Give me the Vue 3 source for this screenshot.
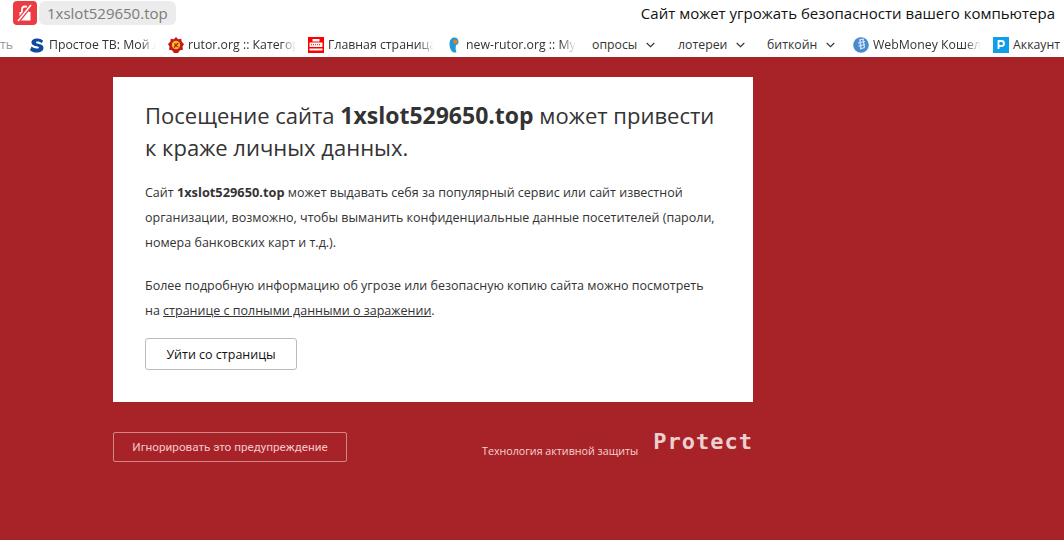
<template>
  <div class="page">
    <header class="browser">
      <div class="address">
        <span class="shield">
          <svg width="24" height="24" viewBox="0 0 24 24">
            <rect x="6.500" y="11" width="11" height="8.500" fill="#fff" />
            <path d="M9 11V8.500a3 3 0 0 1 6 0V11" fill="none" stroke="#fff" stroke-width="1.800" />
            <path d="M5.500 19.500 18.500 3.500" stroke="#ec3b43" stroke-width="4" />
            <path d="M5 20 18 4" stroke="#fff" stroke-width="1.600" />
          </svg>
        </span>
        <span class="host">1xslot529650.top</span>
        <span class="warning">Сайт может угрожать безопасности вашего компьютера</span>
      </div>
      <nav class="bookmarks">
        <span class="cut">ать</span>
        <a v-for="b in bookmarks" :key="b.label" class="mark" :class="{ fade: b.fade, folder: b.folder }" :style="{ width: b.width + 'px' }">
          <svg v-if="b.icon === 's'" class="ico" viewBox="0 0 16 16">
            <path d="M14 3.600C12.500 2.300 10.500 1.500 8.300 1.500 5 1.500 2.500 3 2.500 5.400c0 4.400 7.500 3 7.500 5 0 .8-1 1.200-2.300 1.200-2 0-3.800-.8-5.200-2L1 13.200c1.700 1.400 4 2.300 6.800 2.300 3.700 0 6.700-1.500 6.700-4.700 0-4.500-7.600-3.300-7.600-5.200 0-.7.800-1 1.800-1 1.500 0 3 .6 4.200 1.600z" fill="#0d4a9e" />
          </svg>
          <svg v-else-if="b.icon === 'rutor'" class="ico" viewBox="0 0 16 16">
            <path d="M8 0l2.200 2.300 3-.5.500 3 2.300 2.200-1.500 2.700.5 3-3 .6L10 16H6l-2-2.700-3-.6.500-3L0 7l2.300-2.200.5-3 3 .5z" fill="#c9161d" />
            <circle cx="8" cy="8" r="4.200" fill="#f2c21a" />
            <path d="M6 10.500 10.200 6M6.500 6.500c1.500 2.500 2.500 3.500 4 3.500" stroke="#b3141a" stroke-width="1.200" fill="none" />
          </svg>
          <svg v-else-if="b.icon === 'news'" class="ico" viewBox="0 0 16 16">
            <rect width="16" height="16" fill="#f00" />
            <rect x="4.500" y="2" width="7" height="2.500" fill="#fff" />
            <rect x="1.500" y="5.500" width="13" height="4.500" fill="#fff" />
            <path d="M3 7.700h10" stroke="#f00" stroke-width="1" stroke-dasharray="1 1" />
            <rect x="1.500" y="11.500" width="13" height="2" fill="#fff" />
          </svg>
          <svg v-else-if="b.icon === 'rtk'" class="ico" viewBox="0 0 16 16">
            <path d="M8 15.500C6 15 3.500 12 3.500 7 3.500 3 5.500.5 8.500.5c2.500 0 4 2 4 4.200 0 1.800-1 3-2.500 3.300-.5 2.500-.5 5 .5 7.500z" fill="#1e9ad6" />
            <path d="M7 5.500C7 3.500 8 2.500 9.300 2.500c1.200 0 2 .9 2 2.200 0 1.400-.9 2.300-2 2.300z" fill="#f47b20" />
          </svg>
          <svg v-else-if="b.icon === 'wm'" class="ico" viewBox="0 0 16 16">
            <circle cx="8" cy="8" r="7.800" fill="#4a8bd0" />
            <path d="M6 3l5-1M5 6l7-1.500M5.500 9l6.500-1.500M7 12l4.500-1.500M7 3l1 9.500M10 2.500l1.500 8" stroke="#dbe9f7" stroke-width="1.200" fill="none" />
          </svg>
          <svg v-else-if="b.icon === 'p'" class="ico" viewBox="0 0 16 16">
            <rect width="16" height="16" fill="#0f9fe8" />
            <path d="M5.500 12V4h3a2.500 2.500 0 0 1 0 5h-3" fill="none" stroke="#fff" stroke-width="1.800" />
          </svg>
          <span class="label">{{ b.label }}</span>
          <svg v-if="b.folder" class="chev" width="9" height="6" viewBox="0 0 9 6">
            <path d="M.7 1 4.500 4.700 8.300 1" fill="none" stroke="#333" stroke-width="1.100" />
          </svg>
        </a>
      </nav>
    </header>

    <main class="content">
      <section class="card">
        <h1>Посещение сайта <b>1xslot529650.top</b> может привести к краже личных данных.</h1>
        <p class="first">
          Сайт <b>1xslot529650.top</b> может выдавать себя за популярный сервис или сайт известной организации, возможно, чтобы выманить конфиденциальные данные посетителей (пароли, номера банковских карт и т.д.).
        </p>
        <p class="second">
          Более подробную информацию об угрозе или безопасную копию сайта можно посмотреть на <a class="link">странице с полными данными о заражении</a>.
        </p>
        <button class="leave">Уйти со страницы</button>
      </section>
      <div class="footer">
        <button class="ignore">Игнорировать это предупреждение</button>
        <div class="tech">
          <span class="tech-text">Технология активной защиты</span>
          <span class="protect">Protect</span>
        </div>
      </div>
    </main>
  </div>
</template>

<script setup>
const bookmarks = [
  { label: "Простое ТВ: Мой личный", icon: "s", width: 127, fade: true },
  { label: "rutor.org :: Категории", icon: "rutor", width: 128, fade: true },
  { label: "Главная страница сайта", icon: "news", width: 126, fade: true },
  { label: "new-rutor.org :: Музыка", icon: "rtk", width: 130, fade: true },
  { label: "опросы", width: 70, folder: true },
  { label: "лотереи", width: 73, folder: true },
  { label: "биткойн", width: 74, folder: true },
  { label: "WebMoney Кошелёк", icon: "wm", width: 128, fade: true },
  { label: "Аккаунт", icon: "p", width: 70 },
];
</script>

<style>
html,
body {
  margin: 0;
  background: #a82327;
}
</style>

<style scoped>
.page {
  width: 1064px;
  height: 540px;
  overflow: hidden;
  background: #a82327;
  font-family: "Open Sans", "Noto Sans", sans-serif;
}
.browser {
  height: 57px;
  background: #fff;
  overflow: hidden;
}
.address {
  display: flex;
  align-items: center;
  height: 25px;
  padding: 0 9px 0 13px;
}
.shield {
  display: flex;
  align-items: center;
  justify-content: center;
  width: 24px;
  height: 24px;
  border-radius: 4px;
  background: #ec3b43;
}
.host {
  margin-left: 2px;
  padding: 0 8px;
  height: 24px;
  line-height: 24px;
  border-radius: 6px;
  background: #ececec;
  color: #7b7b7b;
  font-size: 15px;
}
.warning {
  margin-left: auto;
  color: #111;
  font-size: 15px;
}
.bookmarks {
  display: flex;
  align-items: center;
  gap: 12px;
  height: 25px;
  margin-top: 7px;
  overflow: hidden;
  font-size: 12.300px;
  color: #333;
}
.cut {
  width: 13px;
  margin-right: 4px;
  flex: none;
  overflow: hidden;
  direction: rtl;
  color: #999;
}
.mark {
  display: flex;
  flex: none;
  align-items: center;
  gap: 4px;
  overflow: hidden;
  white-space: nowrap;
}
.fade {
  -webkit-mask-image: linear-gradient(to right, #000 88%, transparent 100%);
  mask-image: linear-gradient(to right, #000 88%, transparent 100%);
}
.mark.folder {
  gap: 9px;
  padding-left: 4px;
}
.ico {
  flex: none;
  width: 16px;
  height: 16px;
}
.chev {
  flex: none;
}
.content {
  width: 640px;
  margin-left: 113px;
  padding-top: 20px;
}
.card {
  box-sizing: border-box;
  height: 325px;
  padding: 22px 32px 0;
  background: #fff;
  color: #333;
}
h1 {
  margin: 0;
  font-size: 22px;
  font-weight: 400;
  line-height: 32px;
}
h1 b {
  font-size: 23px;
  font-weight: 700;
}
p {
  margin: 0;
  font-size: 12.500px;
  line-height: 25px;
}
p b {
  font-size: 12.800px;
  font-weight: 700;
}
.first {
  margin-top: 17px;
}
.second {
  margin-top: 18px;
}
.link {
  color: #333;
  text-decoration: underline;
}
.leave {
  display: block;
  width: 152px;
  height: 32px;
  margin-top: 15px;
  padding: 0;
  border: 1px solid #bbb;
  border-radius: 3px;
  background: #fff;
  color: #111;
  font-family: "Open Sans", "Noto Sans", sans-serif;
  font-size: 12.500px;
}
.footer {
  display: flex;
  align-items: center;
  justify-content: space-between;
  margin-top: 30px;
}
.ignore {
  width: 234px;
  height: 30px;
  padding: 0;
  border: 1px solid rgba(255, 255, 255, 0.45);
  border-radius: 2px;
  background: transparent;
  color: #f2c9cb;
  font-family: Roboto, "Liberation Sans", sans-serif;
  font-size: 11.700px;
}
.tech {
  display: flex;
  align-items: center;
  gap: 15px;
}
.tech-text {
  margin-top: 7px;
  color: #f4d3d4;
  font-size: 10.700px;
}
.protect {
  margin-top: -10px;
  color: #eccfd0;
  font-family: "DejaVu Sans Mono", monospace;
  font-size: 22px;
  font-weight: 700;
  line-height: 24px;
  letter-spacing: 1px;
}
</style>
